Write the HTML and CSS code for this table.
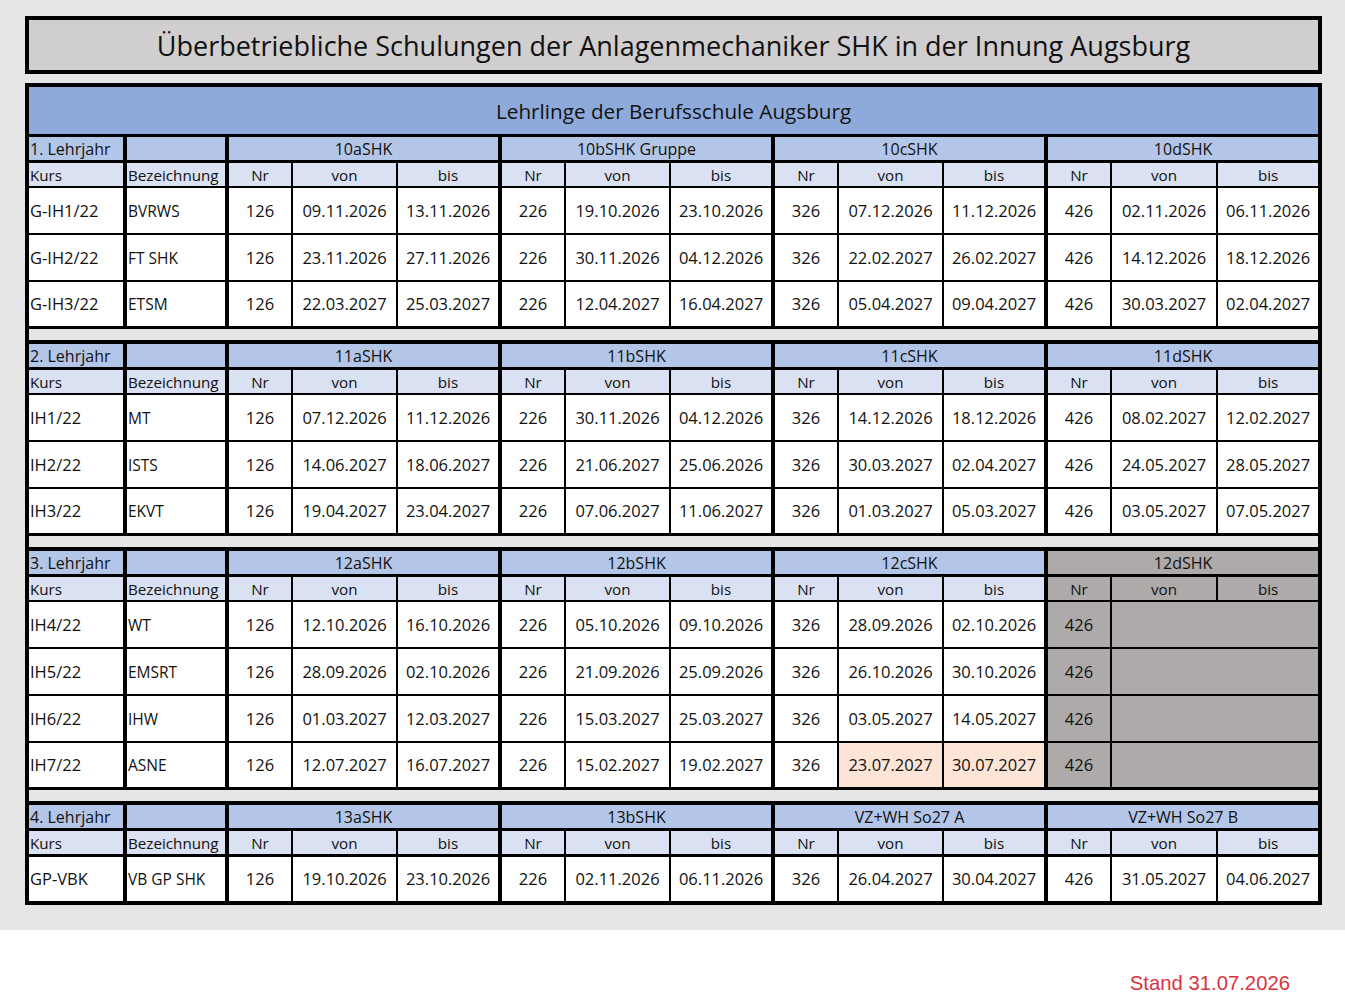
FILE: index.html
```html
<!DOCTYPE html>
<html lang="de">
<head>
<meta charset="utf-8">
<title>Überbetriebliche Schulungen</title>
<link rel="stylesheet" href="styles.css">
</head>
<body>
<div class="sheet">
  <div class="title">Überbetriebliche Schulungen der Anlagenmechaniker SHK in der Innung Augsburg</div>
  <table class="plan">
    <colgroup>
      <col class="w-kurs"><col class="w-bez">
      <col class="w-nr"><col class="w-von"><col class="w-bis">
      <col class="w-nr"><col class="w-von"><col class="w-bis">
      <col class="w-nr"><col class="w-von"><col class="w-bis">
      <col class="w-nr"><col class="w-von4"><col class="w-bis4">
    </colgroup>
    <tbody>
      <tr class="banner"><td colspan="14">Lehrlinge der Berufsschule Augsburg</td></tr>

      <!-- 1. Lehrjahr -->
      <tr class="yr"><td class="k">1. Lehrjahr</td><td class="b"></td><td colspan="3" class="ge">10aSHK</td><td colspan="3" class="ge">10bSHK Gruppe</td><td colspan="3" class="ge">10cSHK</td><td colspan="3" class="last">10dSHK</td></tr>
      <tr class="hd"><td class="k">Kurs</td><td class="b">Bezeichnung</td><td>Nr</td><td>von</td><td class="ge">bis</td><td>Nr</td><td>von</td><td class="ge">bis</td><td>Nr</td><td>von</td><td class="ge">bis</td><td>Nr</td><td>von</td><td class="last">bis</td></tr>
      <tr class="row"><td class="k">G-IH1/22</td><td class="b">BVRWS</td><td>126</td><td>09.11.2026</td><td class="ge">13.11.2026</td><td>226</td><td>19.10.2026</td><td class="ge">23.10.2026</td><td>326</td><td>07.12.2026</td><td class="ge">11.12.2026</td><td>426</td><td>02.11.2026</td><td class="last">06.11.2026</td></tr>
      <tr class="row"><td class="k">G-IH2/22</td><td class="b">FT SHK</td><td>126</td><td>23.11.2026</td><td class="ge">27.11.2026</td><td>226</td><td>30.11.2026</td><td class="ge">04.12.2026</td><td>326</td><td>22.02.2027</td><td class="ge">26.02.2027</td><td>426</td><td>14.12.2026</td><td class="last">18.12.2026</td></tr>
      <tr class="row end"><td class="k">G-IH3/22</td><td class="b">ETSM</td><td>126</td><td>22.03.2027</td><td class="ge">25.03.2027</td><td>226</td><td>12.04.2027</td><td class="ge">16.04.2027</td><td>326</td><td>05.04.2027</td><td class="ge">09.04.2027</td><td>426</td><td>30.03.2027</td><td class="last">02.04.2027</td></tr>
      <tr class="gap"><td colspan="14"></td></tr>

      <!-- 2. Lehrjahr -->
      <tr class="yr"><td class="k">2. Lehrjahr</td><td class="b"></td><td colspan="3" class="ge">11aSHK</td><td colspan="3" class="ge">11bSHK</td><td colspan="3" class="ge">11cSHK</td><td colspan="3" class="last">11dSHK</td></tr>
      <tr class="hd"><td class="k">Kurs</td><td class="b">Bezeichnung</td><td>Nr</td><td>von</td><td class="ge">bis</td><td>Nr</td><td>von</td><td class="ge">bis</td><td>Nr</td><td>von</td><td class="ge">bis</td><td>Nr</td><td>von</td><td class="last">bis</td></tr>
      <tr class="row"><td class="k">IH1/22</td><td class="b">MT</td><td>126</td><td>07.12.2026</td><td class="ge">11.12.2026</td><td>226</td><td>30.11.2026</td><td class="ge">04.12.2026</td><td>326</td><td>14.12.2026</td><td class="ge">18.12.2026</td><td>426</td><td>08.02.2027</td><td class="last">12.02.2027</td></tr>
      <tr class="row"><td class="k">IH2/22</td><td class="b">ISTS</td><td>126</td><td>14.06.2027</td><td class="ge">18.06.2027</td><td>226</td><td>21.06.2027</td><td class="ge">25.06.2026</td><td>326</td><td>30.03.2027</td><td class="ge">02.04.2027</td><td>426</td><td>24.05.2027</td><td class="last">28.05.2027</td></tr>
      <tr class="row end"><td class="k">IH3/22</td><td class="b">EKVT</td><td>126</td><td>19.04.2027</td><td class="ge">23.04.2027</td><td>226</td><td>07.06.2027</td><td class="ge">11.06.2027</td><td>326</td><td>01.03.2027</td><td class="ge">05.03.2027</td><td>426</td><td>03.05.2027</td><td class="last">07.05.2027</td></tr>
      <tr class="gap"><td colspan="14"></td></tr>

      <!-- 3. Lehrjahr -->
      <tr class="yr"><td class="k">3. Lehrjahr</td><td class="b"></td><td colspan="3" class="ge">12aSHK</td><td colspan="3" class="ge">12bSHK</td><td colspan="3" class="ge">12cSHK</td><td colspan="3" class="last grey">12dSHK</td></tr>
      <tr class="hd"><td class="k">Kurs</td><td class="b">Bezeichnung</td><td>Nr</td><td>von</td><td class="ge">bis</td><td>Nr</td><td>von</td><td class="ge">bis</td><td>Nr</td><td>von</td><td class="ge">bis</td><td class="grey">Nr</td><td class="grey">von</td><td class="last grey">bis</td></tr>
      <tr class="row"><td class="k">IH4/22</td><td class="b">WT</td><td>126</td><td>12.10.2026</td><td class="ge">16.10.2026</td><td>226</td><td>05.10.2026</td><td class="ge">09.10.2026</td><td>326</td><td>28.09.2026</td><td class="ge">02.10.2026</td><td class="grey">426</td><td colspan="2" class="last grey"></td></tr>
      <tr class="row"><td class="k">IH5/22</td><td class="b">EMSRT</td><td>126</td><td>28.09.2026</td><td class="ge">02.10.2026</td><td>226</td><td>21.09.2026</td><td class="ge">25.09.2026</td><td>326</td><td>26.10.2026</td><td class="ge">30.10.2026</td><td class="grey">426</td><td colspan="2" class="last grey"></td></tr>
      <tr class="row"><td class="k">IH6/22</td><td class="b">IHW</td><td>126</td><td>01.03.2027</td><td class="ge">12.03.2027</td><td>226</td><td>15.03.2027</td><td class="ge">25.03.2027</td><td>326</td><td>03.05.2027</td><td class="ge">14.05.2027</td><td class="grey">426</td><td colspan="2" class="last grey"></td></tr>
      <tr class="row end"><td class="k">IH7/22</td><td class="b">ASNE</td><td>126</td><td>12.07.2027</td><td class="ge">16.07.2027</td><td>226</td><td>15.02.2027</td><td class="ge">19.02.2027</td><td>326</td><td class="peach">23.07.2027</td><td class="ge peach">30.07.2027</td><td class="grey">426</td><td colspan="2" class="last grey"></td></tr>
      <tr class="gap"><td colspan="14"></td></tr>

      <!-- 4. Lehrjahr -->
      <tr class="yr"><td class="k">4. Lehrjahr</td><td class="b"></td><td colspan="3" class="ge">13aSHK</td><td colspan="3" class="ge">13bSHK</td><td colspan="3" class="ge">VZ+WH So27 A</td><td colspan="3" class="last">VZ+WH So27 B</td></tr>
      <tr class="hd hd-last"><td class="k">Kurs</td><td class="b">Bezeichnung</td><td>Nr</td><td>von</td><td class="ge">bis</td><td>Nr</td><td>von</td><td class="ge">bis</td><td>Nr</td><td>von</td><td class="ge">bis</td><td>Nr</td><td>von</td><td class="last">bis</td></tr>
      <tr class="row final"><td class="k">GP-VBK</td><td class="b">VB GP SHK</td><td>126</td><td>19.10.2026</td><td class="ge">23.10.2026</td><td>226</td><td>02.11.2026</td><td class="ge">06.11.2026</td><td>326</td><td>26.04.2027</td><td class="ge">30.04.2027</td><td>426</td><td>31.05.2027</td><td class="last">04.06.2027</td></tr>
    </tbody>
  </table>
</div>
<div class="stand">Stand 31.07.2026</div>
</body>
</html>
```

FILE: styles.css
```css
* { box-sizing: border-box; }

html, body {
  margin: 0;
  padding: 0;
  background: #ffffff;
}

body {
  font-family: "Open Sans", "Noto Sans", sans-serif;
  color: #111111;
}

.sheet {
  background: #e6e6e6;
  height: 930px;
  padding: 16px 0 0 25px;
}

.title {
  width: 1297px;
  height: 58px;
  border: 4px solid #000000;
  background: #d0cece;
  display: flex;
  align-items: center;
  justify-content: center;
  font-size: 27px;
  color: #111111;
  margin-bottom: 9px;
}

.plan {
  width: 1297px;
  table-layout: fixed;
  border-collapse: separate;
  border-spacing: 0;
  border: 4px solid #000000;
  background: #ffffff;
}

.w-kurs { width: 98px; }
.w-bez { width: 102px; }
.w-nr { width: 64px; }
.w-von { width: 105px; }
.w-bis { width: 104px; }
.w-von4 { width: 106px; }
.w-bis4 { width: 100px; }

.plan td {
  padding: 0;
  border-right: 2px solid #000000;
  border-bottom: 2px solid #000000;
  text-align: center;
  vertical-align: middle;
  white-space: nowrap;
  overflow: hidden;
  font-size: 16.5px;
  line-height: 20px;
}

.plan td.k,
.plan td.b,
.plan td.ge {
  border-right-width: 4px;
}

.plan td.last {
  border-right: 0;
}

.plan td.k,
.plan td.b {
  text-align: left;
  padding-left: 1px;
}

/* banner */
.banner td {
  height: 50px;
  background: #8eaadb;
  border-right: 0;
  border-bottom-width: 3px;
  font-size: 20.7px;
  padding-top: 1px;
}

/* year header row */
.yr td {
  height: 26px;
  background: #b4c6e7;
  border-bottom-width: 3px;
  font-size: 16px;
}

/* column header row */
.hd td {
  height: 25px;
  background: #d9e1f2;
  font-size: 15.2px;
}

.hd-last td {
  border-bottom-width: 3px;
  height: 26px;
}

/* data rows */
.row td {
  height: 47px;
  background: #ffffff;
}

.row td.b {
  font-size: 15.5px;
}

.row.end td {
  border-bottom-width: 3px;
}

.row.final td {
  height: 44px;
  border-bottom: 0;
}

/* spacer */
.gap td {
  height: 15px;
  background: #e7e6e6;
  border-right: 0;
  border-bottom-width: 4px;
}

.plan td.grey {
  background: #aeaaaa;
}

.plan td.peach {
  background: #fce4d6;
}

.stand {
  text-align: right;
  padding: 42px 55px 0 0;
  font-family: "Liberation Sans", Arial, sans-serif;
  font-size: 20.3px;
  line-height: 23px;
  color: #d9343f;
}
```
